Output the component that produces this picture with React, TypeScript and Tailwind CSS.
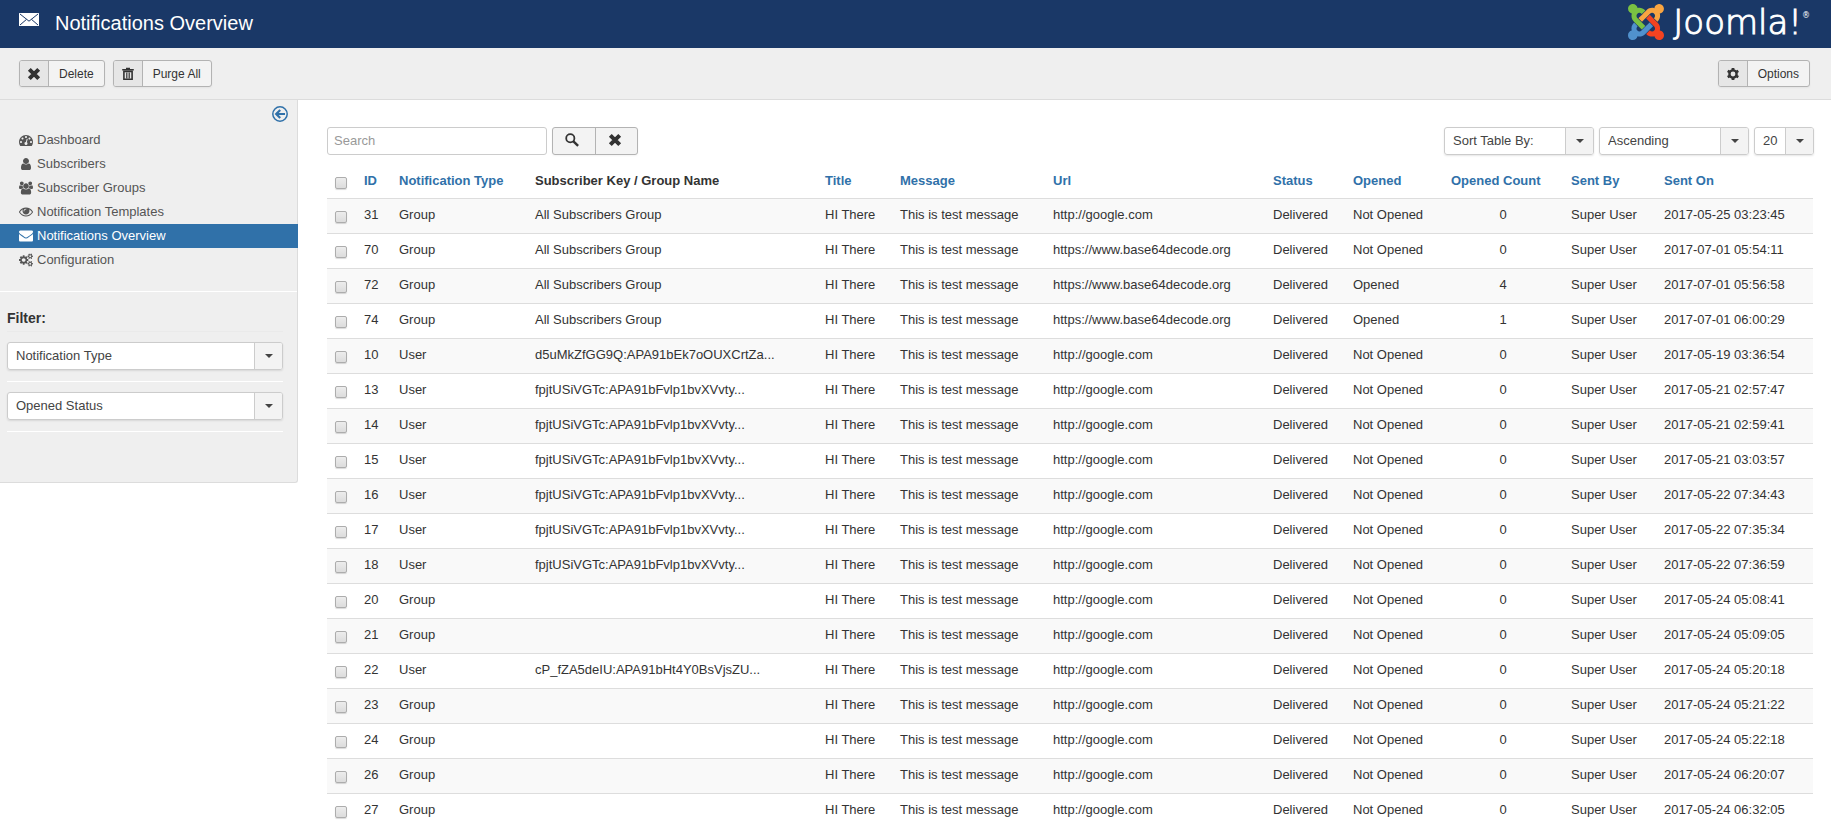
import { useState } from "react"
import type { ReactNode } from "react"
import clsx from "clsx"

interface NavItem {
  label: string
  viewBox: string
  path: string
}

interface NotificationRow {
  id: number
  type: string
  key: string
  url: string
  opened: string
  count: number
  sentOn: string
}

const navItems: NavItem[] = [
  {
    label: "Dashboard",
    viewBox: "0 0 1792 1792",
    path: "M384 1152q0-53-37.5-90.5t-90.5-37.5-90.5 37.5-37.5 90.5 37.5 90.5 90.5 37.5 90.5-37.5 37.5-90.5zm192-448q0-53-37.5-90.5t-90.5-37.5-90.5 37.5-37.5 90.5 37.5 90.5 90.5 37.5 90.5-37.5 37.5-90.5zm428 481l101-382q6-26-7.5-48.5t-38.5-29.5-48 6.5-30 39.5l-101 382q-60 5-107 43.5t-63 98.5q-20 77 20 146t117 89 146-20 89-117q16-60-6-117t-72-91zm660-33q0-53-37.5-90.5t-90.5-37.5-90.5 37.5-37.5 90.5 37.5 90.5 90.5 37.5 90.5-37.5 37.5-90.5zm-640-640q0-53-37.5-90.5t-90.5-37.5-90.5 37.5-37.5 90.5 37.5 90.5 90.5 37.5 90.5-37.5 37.5-90.5zm448 192q0-53-37.5-90.5t-90.5-37.5-90.5 37.5-37.5 90.5 37.5 90.5 90.5 37.5 90.5-37.5 37.5-90.5zm320 448q0 261-141 483-19 29-54 29h-1402q-35 0-54-29-141-221-141-483 0-182 71-348t191-286 286-191 348-71 348 71 286 191 191 286 71 348z",
  },
  {
    label: "Subscribers",
    viewBox: "-256 0 1792 1792",
    path: "M1280 1399q0 109-62.5 187t-150.5 78h-854q-88 0-150.5-78t-62.5-187q0-85 8.5-160.5t31.5-152 58.5-131 94-89 134.5-34.5q131 128 313 128t313-128q76 0 134.5 34.5t94 89 58.5 131 31.5 152 8.5 160.5zm-256-887q0 159-112.5 271.5t-271.5 112.5-271.5-112.5-112.5-271.5 112.5-271.5 271.5-112.5 271.5 112.5 112.5 271.5z",
  },
  {
    label: "Subscriber Groups",
    viewBox: "0 0 1920 1792",
    path: "M593 896q-162 5-265 128h-134q-82 0-138-40.5t-56-118.5q0-353 124-353 6 0 43.5 21t97.5 42.5 119 21.5q67 0 133-23-5 37-5 66 0 139 81 256zm1071 637q0 120-73 189.5t-194 69.5h-874q-121 0-194-69.5t-73-189.5q0-53 3.5-103.5t14-109 26.5-108.5 43-97.5 62-81 85.5-53.5 111.5-20q10 0 43 21.5t73 48 107 48 135 21.5 135-21.5 107-48 73-48 43-21.5q61 0 111.5 20t85.5 53.5 62 81 43 97.5 26.5 108.5 14 109 3.5 103.5zm-1024-1277q0 106-75 181t-181 75-181-75-75-181 75-181 181-75 181 75 75 181zm704 384q0 159-112.5 271.5t-271.5 112.5-271.5-112.5-112.5-271.5 112.5-271.5 271.5-112.5 271.5 112.5 112.5 271.5zm576 225q0 78-56 118.5t-138 40.5h-134q-103-123-265-128 81-117 81-256 0-29-5-66 66 23 133 23 59 0 119-21.5t97.5-42.5 43.5-21q124 0 124 353zm-128-609q0 106-75 181t-181 75-181-75-75-181 75-181 181-75 181 75 75 181z",
  },
  {
    label: "Notification Templates",
    viewBox: "0 64 1792 1792",
    path: "M1664 960q-152-236-381-353 61 104 61 225 0 185-131.5 316.5t-316.5 131.5-316.5-131.5-131.5-316.5q0-121 61-225-229 117-381 353 133 205 333.5 326.5t434.5 121.5 434.5-121.5 333.5-326.5zm-720-384q0-20-14-34t-34-14q-125 0-214.5 89.5t-89.5 214.5q0 20 14 34t34 14 34-14 14-34q0-86 61-147t147-61q20 0 34-14t14-34zm848 384q0 34-20 69-140 230-376.5 368.5t-499.5 138.5-499.5-139-376.5-368q-20-35-20-69t20-69q140-229 376.5-368t499.5-139 499.5 139 376.5 368q20 35 20 69z",
  },
  {
    label: "Notifications Overview",
    viewBox: "0 64 1792 1792",
    path: "M1792 710v794q0 66-47 113t-113 47h-1472q-66 0-113-47t-47-113v-794q44 49 101 87 362 246 497 345 57 42 92.5 65.5t94.5 48 110 24.5h2q51 0 110-24.5t94.5-48 92.5-65.5q170-123 498-345 57-39 100-87zm0-294q0 79-49 151t-122 123q-376 261-468 325-10 7-42.5 31t-54 38.5-52 32.5-57.5 27-50 9h-2q-23 0-50-9t-57.5-27-52-32.5-54-38.5-42.5-31q-91-64-262-182.5t-205-142.5q-62-42-117-115.5t-55-136.5q0-78 41.5-130t118.5-52h1472q65 0 112.5 47t47.5 113z",
  },
  {
    label: "Configuration",
    viewBox: "0 0 1920 1792",
    path: "M896 896q0-106-75-181t-181-75-181 75-75 181 75 181 181 75 181-75 75-181zm768 512q0-52-38-90t-90-38-90 38-38 90q0 53 37.5 90.5t90.5 37.5 90.5-37.5 37.5-90.5zm0-1024q0-52-38-90t-90-38-90 38-38 90q0 53 37.5 90.5t90.5 37.5 90.5-37.5 37.5-90.5zm-384 421v185q0 10-7 19.5t-16 10.5l-155 24q-11 35-32 76 34 48 90 115 7 11 7 20 0 12-7 19-23 30-82.5 89.5t-78.5 59.5q-11 0-21-7l-115-90q-37 19-77 31-11 108-23 155-7 24-30 24h-186q-11 0-20-7.5t-10-17.5l-23-153q-34-10-75-31l-118 89q-7 7-20 7-11 0-21-8-144-133-144-160 0-9 7-19 10-14 41-53t47-61q-23-44-35-82l-152-24q-10-1-17-9.5t-7-19.5v-185q0-10 7-19.5t16-10.5l155-24q11-35 32-76-34-48-90-115-7-11-7-20 0-12 7-20 22-30 82-89t79-59q11 0 21 7l115 90q34-18 77-32 11-108 23-154 7-24 30-24h186q11 0 20 7.5t10 17.5l23 153q34 10 75 31l118-89q8-7 20-7 11 0 21 8 144 133 144 160 0 8-7 19-12 16-42 54t-45 60q23 48 34 82l152 23q10 2 17 10.5t7 19.5zm640 533v140q0 16-149 31-12 27-30 52 51 113 51 138 0 4-4 7-122 71-124 71-8 0-46-47t-52-68q-20 2-30 2t-30-2q-14 21-52 68t-46 47q-2 0-124-71-4-3-4-7 0-25 51-138-18-25-30-52-149-15-149-31v-140q0-16 149-31 13-29 30-52-51-113-51-138 0-4 4-7 4-2 35-20t59-34 30-16q8 0 46 46.5t52 67.5q20-2 30-2t30 2q51-71 92-112l6-2q4 0 124 70 4 3 4 7 0 25-51 138 17 23 30 52 149 15 149 31zm0-1024v140q0 16-149 31-12 27-30 52 51 113 51 138 0 4-4 7-122 71-124 71-8 0-46-47t-52-68q-20 2-30 2t-30-2q-14 21-52 68t-46 47q-2 0-124-71-4-3-4-7 0-25 51-138-18-25-30-52-149-15-149-31v-140q0-16 149-31 13-29 30-52-51-113-51-138 0-4 4-7 4-2 35-20t59-34 30-16q8 0 46 46.5t52 67.5q20-2 30-2t30 2q51-71 92-112l6-2q4 0 124 70 4 3 4 7 0 25-51 138 17 23 30 52 149 15 149 31z",
  },
]

const GOOGLE = "http://google.com"
const DECODE = "https://www.base64decode.org"
const ALL = "All Subscribers Group"
const FPJT = "fpjtUSiVGTc:APA91bFvlp1bvXVvty..."

const rows: NotificationRow[] = [
  { id: 31, type: "Group", key: ALL, url: GOOGLE, opened: "Not Opened", count: 0, sentOn: "2017-05-25 03:23:45" },
  { id: 70, type: "Group", key: ALL, url: DECODE, opened: "Not Opened", count: 0, sentOn: "2017-07-01 05:54:11" },
  { id: 72, type: "Group", key: ALL, url: DECODE, opened: "Opened", count: 4, sentOn: "2017-07-01 05:56:58" },
  { id: 74, type: "Group", key: ALL, url: DECODE, opened: "Opened", count: 1, sentOn: "2017-07-01 06:00:29" },
  { id: 10, type: "User", key: "d5uMkZfGG9Q:APA91bEk7oOUXCrtZa...", url: GOOGLE, opened: "Not Opened", count: 0, sentOn: "2017-05-19 03:36:54" },
  { id: 13, type: "User", key: FPJT, url: GOOGLE, opened: "Not Opened", count: 0, sentOn: "2017-05-21 02:57:47" },
  { id: 14, type: "User", key: FPJT, url: GOOGLE, opened: "Not Opened", count: 0, sentOn: "2017-05-21 02:59:41" },
  { id: 15, type: "User", key: FPJT, url: GOOGLE, opened: "Not Opened", count: 0, sentOn: "2017-05-21 03:03:57" },
  { id: 16, type: "User", key: FPJT, url: GOOGLE, opened: "Not Opened", count: 0, sentOn: "2017-05-22 07:34:43" },
  { id: 17, type: "User", key: FPJT, url: GOOGLE, opened: "Not Opened", count: 0, sentOn: "2017-05-22 07:35:34" },
  { id: 18, type: "User", key: FPJT, url: GOOGLE, opened: "Not Opened", count: 0, sentOn: "2017-05-22 07:36:59" },
  { id: 20, type: "Group", key: "", url: GOOGLE, opened: "Not Opened", count: 0, sentOn: "2017-05-24 05:08:41" },
  { id: 21, type: "Group", key: "", url: GOOGLE, opened: "Not Opened", count: 0, sentOn: "2017-05-24 05:09:05" },
  { id: 22, type: "User", key: "cP_fZA5deIU:APA91bHt4Y0BsVjsZU...", url: GOOGLE, opened: "Not Opened", count: 0, sentOn: "2017-05-24 05:20:18" },
  { id: 23, type: "Group", key: "", url: GOOGLE, opened: "Not Opened", count: 0, sentOn: "2017-05-24 05:21:22" },
  { id: 24, type: "Group", key: "", url: GOOGLE, opened: "Not Opened", count: 0, sentOn: "2017-05-24 05:22:18" },
  { id: 26, type: "Group", key: "", url: GOOGLE, opened: "Not Opened", count: 0, sentOn: "2017-05-24 06:20:07" },
  { id: 27, type: "Group", key: "", url: GOOGLE, opened: "Not Opened", count: 0, sentOn: "2017-05-24 06:32:05" },
]

// The subscriber key column has no width, it takes what is left
const columns = [
  { label: "ID", width: "w-[35px]", sortable: true },
  { label: "Notification Type", width: "w-[136px]", sortable: true },
  { label: "Subscriber Key / Group Name", width: "", sortable: false },
  { label: "Title", width: "w-[75px]", sortable: true },
  { label: "Message", width: "w-[153px]", sortable: true },
  { label: "Url", width: "w-[220px]", sortable: true },
  { label: "Status", width: "w-[80px]", sortable: true },
  { label: "Opened", width: "w-[98px]", sortable: true },
  { label: "Opened Count", width: "w-[120px]", sortable: true },
  { label: "Sent By", width: "w-[93px]", sortable: true },
  { label: "Sent On", width: "w-[157px]", sortable: true },
]

function CrossIcon() {
  return (
    <svg viewBox="0 0 14 14" className="h-[14px] w-[14px]" aria-hidden="true">
      <path d="M2.3 2.3l9.4 9.4M11.7 2.3l-9.4 9.4" stroke="currentColor" strokeWidth="4" />
    </svg>
  )
}

function TrashIcon() {
  return (
    <svg viewBox="0 0 14 14" className="h-[14px] w-[14px]" fill="none" stroke="currentColor" aria-hidden="true">
      <path d="M1.2 2.7h11.6" strokeWidth="1.6" />
      <path d="M5 1.6h4" strokeWidth="1.6" />
      <path d="M2.9 4.4h8.2v7.9H2.9z" strokeWidth="1.6" />
      <path d="M5.5 5.5v6M7 5.5v6M8.5 5.5v6" strokeWidth="0.8" />
    </svg>
  )
}

function CogIcon() {
  return (
    <svg viewBox="0 0 14 14" className="h-[14px] w-[14px]" fill="none" stroke="currentColor" aria-hidden="true">
      <circle cx="7" cy="7" r="3.6" strokeWidth="2.4" />
      <path d="M7 .9v2M7 11.1v2M1.7 3.9l1.8 1M10.5 9.1l1.8 1M1.7 10.1l1.8-1M10.5 4.9l1.8-1" strokeWidth="2.8" />
    </svg>
  )
}

function SearchIcon() {
  return (
    <svg viewBox="0 0 14 14" className="h-[14px] w-[14px]" fill="none" stroke="currentColor" aria-hidden="true">
      <circle cx="5.3" cy="5.3" r="4.1" strokeWidth="1.8" />
      <path d="M8.2 8.2l4.9 4.7" strokeWidth="2.4" />
    </svg>
  )
}

function JoomlaLogo() {
  return (
    <a href="#" aria-label="Joomla!" className="flex items-center gap-[9px] pb-1 text-white">
      <svg viewBox="0 32 448 448" className="h-9 w-9" aria-hidden="true">
        <path fill="#7ac143" d="M.6 92.1C.6 58.8 27.4 32 60.4 32c30 0 54.5 21.9 59.2 50.2 32.6-7.6 67.1.6 96.5 30l-44.3 44.3c-20.5-20.5-42.6-16.3-55.4-3.5-14.3 14.3-14.3 37.9 0 52.2l99.5 99.5-44 44.3c-87.7-87.2-49.7-49.7-99.8-99.7-26.8-26.5-35-64.8-24.8-98.9C20.4 144.6.6 120.7.6 92.1z" />
        <path fill="#f9a541" d="M130.1 208.5l44.3 44.3c10-10 89.7-89.7 99.7-99.8 14.3-14.3 37.6-14.3 51.9 0 12.8 12.8 17 35-3.5 55.4l44 44.3c31.2-31.2 38.5-67.6 28.9-101.2 29.2-4.1 51.9-29.2 51.9-59.5 0-33.2-26.8-60.1-59.8-60.1-30.3 0-55.4 22.5-59.5 51.6-33.8-9.9-71.7-1.5-98.3 25.1-18.3 19.1-71.1 71.5-99.6 99.9z" />
        <path fill="#f44321" d="M396.4 360.7c8.2-32.7-.9-68.5-26.3-93.9-11.8-12.2 5 4.7-99.5-99.7l-44.3 44.3 99.7 99.7c14.3 14.3 14.3 37.6 0 51.9-12.8 12.8-35 17-55.4-3.5l-44 44.3c27.6 30.2 68 38.8 102.7 28 5.5 27.4 29.7 48.1 58.9 48.1 33 0 59.8-26.8 59.8-60.1 0-30.2-22.5-55-51.6-59.1z" />
        <path fill="#5091cd" d="M312.1 307.6l-44-44.3c-87 86.4-50.4 50.4-99.7 99.8-14.3 14.3-37.6 14.3-51.9 0-13.1-13.4-16.9-35.3 3.2-55.4l-44-44.3c-30.2 30.2-38 65.2-29.5 98.3-26.7 6-46.2 29.9-46.2 58.2C0 453.2 26.8 480 59.8 480c28.6 0 52.5-19.8 58.6-46.7 32.7 8.2 68.5-.6 94.2-26 32.1-32 12.2-12.4 99.5-99.7z" />
      </svg>
      <span className="flex items-start font-['DejaVu_Sans',sans-serif] text-[34px] leading-9 font-extralight">
        <span className="[-webkit-text-stroke:1px]">Joomla!</span>
        <sup className="pt-3 text-[8px] leading-none font-normal">®</sup>
      </span>
    </a>
  )
}

function ToolbarButton({ label, icon }: { label: string; icon: ReactNode }) {
  return (
    <button className="flex h-[27px] overflow-hidden rounded-[3px] border border-[#b3b3b3] bg-[#f3f3f3] text-xs text-[#333] shadow-[0_1px_2px_rgba(0,0,0,0.05)]">
      <span className="flex h-full w-[29px] items-center justify-center border-r border-[#b3b3b3] bg-[#e6e6e6]">{icon}</span>
      <span className="self-center px-[10px]">{label}</span>
    </button>
  )
}

function SelectBox({ label, options, className }: { label: string; options: string[]; className?: string }) {
  return (
    <div className={clsx("relative h-7 rounded-[3px] shadow-[0_1px_2px_rgba(0,0,0,0.1)]", className)}>
      <select
        aria-label={label}
        className="block h-full w-full appearance-none rounded-[3px] border border-[#ccc] bg-white pr-7 pb-px pl-2 text-[13px] text-[#444] outline-none"
      >
        {options.map((option) => (
          <option key={option}>{option}</option>
        ))}
      </select>
      <span className="pointer-events-none absolute inset-y-px right-px flex w-7 items-center justify-center rounded-r-[2px] border-l border-[#ccc] bg-[#f3f3f3] pb-px">
        <svg viewBox="0 0 8 4" className="h-1 w-2" aria-hidden="true">
          <path d="M0 0h8L4 4z" fill="#444" />
        </svg>
      </span>
    </div>
  )
}

function Checkbox({ label, checked, onChange }: { label: string; checked: boolean; onChange: () => void }) {
  return (
    <input
      type="checkbox"
      aria-label={label}
      checked={checked}
      onChange={onChange}
      className="mt-1 block h-3 w-3 appearance-none rounded-[2px] border border-[#adadad] bg-linear-to-b from-[#ededed] to-[#dcdcdc] shadow-[0_1px_1px_rgba(0,0,0,0.15)] checked:from-[#3071a9] checked:to-[#3071a9]"
    />
  )
}

export default function App() {
  const [activeItem, setActiveItem] = useState("Notifications Overview")
  const [search, setSearch] = useState("")
  const [selected, setSelected] = useState<number[]>([])

  const allSelected = selected.length === rows.length

  const toggleRow = (id: number) => {
    setSelected(selected.includes(id) ? selected.filter((s) => s !== id) : [...selected, id])
  }

  return (
    <div className="min-h-screen bg-white font-['Liberation_Sans',Arial,sans-serif] text-[13px] leading-[18px] text-[#333]">
      {/* Header */}
      <header className="flex h-12 items-center justify-between bg-[#1a3867] pr-[21px] pl-[19px]">
        <div className="flex items-center gap-4 pb-[3px]">
          <svg viewBox="0 0 20 13" className="mb-[6px] h-[13px] w-5" aria-hidden="true">
            <rect width="20" height="13" rx="0.5" fill="#fff" />
            <path d="M1 1l9 7.2L19 1M1 12l6.6-5.7M19 12l-6.6-5.7" fill="none" stroke="#1a3867" strokeWidth="1" />
          </svg>
          <h1 className="text-xl leading-6 text-white">Notifications Overview</h1>
        </div>
        <JoomlaLogo />
      </header>

      {/* Toolbar */}
      <div className="flex h-[52px] items-start justify-between border-b border-[#dcdcdc] bg-[#efefef] pt-3 pr-[21px] pl-[19px]">
        <div className="flex gap-2">
          <ToolbarButton label="Delete" icon={<CrossIcon />} />
          <ToolbarButton label="Purge All" icon={<TrashIcon />} />
        </div>
        <ToolbarButton label="Options" icon={<CogIcon />} />
      </div>

      <div className="flex items-start">
        {/* Sidebar */}
        <aside className="w-[298px] shrink-0 rounded-br-[3px] border-r border-b border-[#dcdcdc] bg-[#efefef] pb-[50px]">
          <div className="flex h-7 justify-end pt-[6px] pr-[9px]">
            <button aria-label="Toggle sidebar" className="h-4 w-4 text-[#3071a9]">
              <svg viewBox="0 0 16 16" fill="none" stroke="currentColor" aria-hidden="true">
                <circle cx="8" cy="8" r="7.2" strokeWidth="1.5" />
                <path d="M13 8H4.5M8.2 4L4.2 8l4 4" strokeWidth="2.2" />
              </svg>
            </button>
          </div>
          <nav className="-mr-px">
            {navItems.map((item) => (
              <a
                key={item.label}
                href="#"
                onClick={() => setActiveItem(item.label)}
                className={clsx(
                  "flex h-6 items-center gap-1 pb-px pl-[19px]",
                  activeItem === item.label ? "bg-[#3071a9] text-white" : "text-[#555]",
                )}
              >
                <svg viewBox={item.viewBox} className="h-[14px] w-[14px]" fill="currentColor" aria-hidden="true">
                  <path d={item.path} />
                </svg>
                {item.label}
              </a>
            ))}
          </nav>
          <hr className="mt-[19px] border-t border-white" />
          <div className="pt-[17px] pr-[14px] pl-[7px]">
            <h4 className="text-sm leading-[18px] font-bold">Filter:</h4>
            <hr className="mt-1 mb-[10px] border-t border-[#eaeaea]" />
            <SelectBox label="Notification Type" options={["Notification Type", "Group", "User"]} />
            <hr className="mt-[11px] mb-[10px] border-t border-white" />
            <SelectBox label="Opened Status" options={["Opened Status", "Opened", "Not Opened"]} />
            <hr className="mt-[11px] border-t border-white" />
          </div>
        </aside>

        {/* Content */}
        <main className="min-w-0 flex-1 pt-[27px] pr-[18px] pl-[29px]">
          <div className="-mr-px flex justify-between">
            <div className="flex gap-[5px]">
              <input
                type="text"
                aria-label="Search"
                placeholder="Search"
                value={search}
                onChange={(e) => setSearch(e.target.value)}
                className="h-7 w-[220px] rounded-[3px] border border-[#ccc] bg-white px-[6px] pb-px text-[13px] text-[#555] outline-none placeholder:text-[#999]"
              />
              <div className="flex h-7 overflow-hidden rounded-[3px] border border-[#b3b3b3] bg-[#f3f3f3] shadow-[0_1px_2px_rgba(0,0,0,0.05)]">
                <button aria-label="Search" className="flex w-[43px] justify-center border-r border-[#b3b3b3] pt-[5px] pr-1">
                  <SearchIcon />
                </button>
                <button aria-label="Clear" onClick={() => setSearch("")} className="flex w-[41px] justify-center pt-[5px] pr-1">
                  <CrossIcon />
                </button>
              </div>
            </div>
            <div className="flex gap-[5px]">
              <SelectBox label="Sort Table By" options={["Sort Table By:", "ID", "Title", "Sent On"]} className="w-[150px]" />
              <SelectBox label="Order" options={["Ascending", "Descending"]} className="w-[150px]" />
              <SelectBox label="List limit" options={["20", "50", "100"]} className="w-[60px]" />
            </div>
          </div>

          <table className="mt-2 w-full table-fixed text-left whitespace-nowrap">
            <thead>
              <tr>
                <th className="h-[35px] w-[29px] px-2 pt-px align-middle">
                  <Checkbox
                    label="Check all"
                    checked={allSelected}
                    onChange={() => setSelected(allSelected ? [] : rows.map((row) => row.id))}
                  />
                </th>
                {columns.map((column) => (
                  <th key={column.label} className={clsx("px-2 pt-px align-middle font-bold", column.width)}>
                    {column.sortable ? (
                      <a href="#" className="text-[#3071a9]">
                        {column.label}
                      </a>
                    ) : (
                      column.label
                    )}
                  </th>
                ))}
              </tr>
            </thead>
            <tbody>
              {rows.map((row) => (
                <tr key={row.id} className="border-t border-[#ddd] odd:bg-[#f9f9f9] [&>td]:px-2 [&>td]:pb-px">
                  <td className="h-[35px]">
                    <Checkbox
                      label={`Select ${row.id}`}
                      checked={selected.includes(row.id)}
                      onChange={() => toggleRow(row.id)}
                    />
                  </td>
                  <td>{row.id}</td>
                  <td>{row.type}</td>
                  <td>{row.key}</td>
                  <td>HI There</td>
                  <td>This is test message</td>
                  <td>{row.url}</td>
                  <td>Delivered</td>
                  <td>{row.opened}</td>
                  <td className="text-center">{row.count}</td>
                  <td>Super User</td>
                  <td>{row.sentOn}</td>
                </tr>
              ))}
            </tbody>
          </table>
        </main>
      </div>
    </div>
  )
}
